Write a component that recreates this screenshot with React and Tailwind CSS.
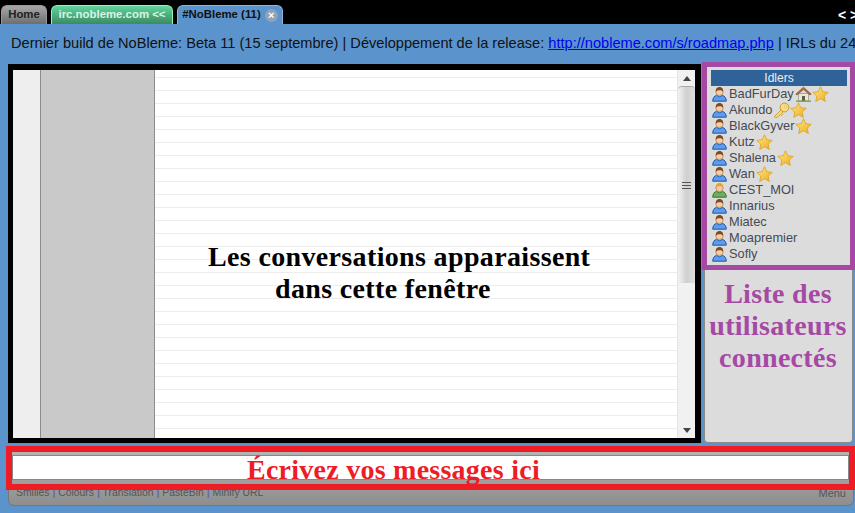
const users = [
  { name: "BadFurDay", badges: ["house", "star"] },
  { name: "Akundo", badges: ["key", "star"] },
  { name: "BlackGyver", badges: ["star"] },
  { name: "Kutz", badges: ["star"] },
  { name: "Shalena", badges: ["star"] },
  { name: "Wan", badges: ["star"] },
  { name: "CEST_MOI", badges: [], me: true },
  { name: "Innarius", badges: [] },
  { name: "Miatec", badges: [] },
  { name: "Moapremier", badges: [] },
  { name: "Sofly", badges: [] },
];

const chatLines = Array.from({ length: 29 });

function UserIcon({ me }) {
  return (
    <svg width="15" height="16" viewBox="0 0 15 16" className="shrink-0">
      <path
        d="M0.7 15.2c0-3.2 1.8-5.4 3.8-5.8l3 1.4 3-1.4c2 .4 3.8 2.6 3.8 5.8z"
        fill={me ? "#6fae5a" : "#5a9cf0"}
        stroke={me ? "#3f7335" : "#2b559f"}
        strokeWidth="1"
      />
      <circle cx="7.5" cy="6" r="3.6" fill="#f3cda6" stroke="#a8744a" strokeWidth="0.7" />
      <path
        d="M3.8 5.8C3.4 2.6 5.4 1 7.5 1s4.1 1.6 3.7 4.8C10.4 4.4 9 4 7.5 4.2 6 4.2 4.6 4.4 3.8 5.8z"
        fill={me ? "#f0a020" : "#7c4a22"}
      />
    </svg>
  );
}

function Star() {
  return (
    <svg width="17" height="16" viewBox="0 0 17 16" className="shrink-0">
      <defs>
        <linearGradient id="starFill" x1="0" y1="0" x2="1" y2="1">
          <stop offset="0" stopColor="#fde88a" />
          <stop offset="1" stopColor="#eeaa1c" />
        </linearGradient>
      </defs>
      <path
        d="M8.5.8l2.3 4.9 5.4.7-4 3.7 1.1 5.3-4.8-2.7-4.8 2.7 1.1-5.3-4-3.7 5.4-.7z"
        fill="url(#starFill)"
        stroke="#d9a21e"
        strokeWidth="0.8"
      />
    </svg>
  );
}

function House() {
  return (
    <svg width="17" height="16" viewBox="0 0 17 16" className="shrink-0">
      <path d="M3.5 7.5h10v7.5h-10z" fill="#efe6d2" stroke="#9a8f78" strokeWidth="0.7" />
      <path d="M7 10h3v5H7z" fill="#5d5a50" />
      <path d="M0.8 8.2L8.5 1.2l7.7 7-1.4.6-6.3-5.4-6.3 5.4z" fill="#b5733a" stroke="#7b4a22" strokeWidth="0.7" />
      <path d="M1 15.2h15" stroke="#6ea84a" strokeWidth="1.4" />
    </svg>
  );
}

function Key() {
  return (
    <svg width="17" height="16" viewBox="0 0 17 16" className="shrink-0">
      <path d="M1.5 14.5L8 8l2 2-1.3 1.3 1 1-1.5 1.2-1-1-3 3-2.7-.4z" fill="#fbdc7a" stroke="#c0922a" strokeWidth="0.8" />
      <circle cx="11.5" cy="5.5" r="4.4" fill="#fbdc7a" stroke="#c0922a" strokeWidth="0.9" />
      <circle cx="12.5" cy="4.5" r="1.2" fill="#fff7d8" stroke="#c0922a" strokeWidth="0.5" />
    </svg>
  );
}

const badgeIcons = { star: Star, house: House, key: Key };

function UserRow({ user }) {
  return (
    <div className="flex h-4 items-center">
      <UserIcon me={user.me} />
      <span className="ml-[2px] mr-px text-[12.8px] text-[#444a55]">{user.name}</span>
      {user.badges.map((badge, index) => {
        const Badge = badgeIcons[badge];
        return <Badge key={index} />;
      })}
    </div>
  );
}

function Scrollbar() {
  return (
    <div className="flex w-[18px] shrink-0 flex-col border-l border-[#e4e4e4] bg-[#f1f1f1]">
      <div className="flex h-[16px] shrink-0 items-center justify-center">
        <div className="h-0 w-0 border-x-[4px] border-b-[5px] border-x-transparent border-b-[#444]" />
      </div>
      <div className="flex h-[197px] shrink-0 flex-col items-center justify-center gap-[2px] rounded-t-sm border-t border-[#aaa] bg-gradient-to-r from-[#f2f2f2] via-[#d0d0d0] to-[#dedede]">
        <div className="h-px w-[9px] bg-[#555]" />
        <div className="h-px w-[9px] bg-[#555]" />
        <div className="h-px w-[9px] bg-[#555]" />
      </div>
      <div className="flex-1" />
      <div className="flex h-[16px] shrink-0 items-center justify-center">
        <div className="h-0 w-0 border-x-[4px] border-t-[5px] border-x-transparent border-t-[#444]" />
      </div>
    </div>
  );
}

export default function App() {
  return (
    <div className="relative h-[513px] w-[855px] overflow-hidden bg-[#5b94cc] font-['Liberation_Sans',sans-serif]">
      <div className="flex h-6 items-end gap-1 bg-black pl-px">
        <div className="flex h-[19px] w-[46px] items-center justify-center rounded-t-md border border-b-0 border-[#999] bg-gradient-to-b from-[#a8a8a8] to-[#6e6e6e] text-[11.4px] font-bold text-[#222]">
          Home
        </div>
        <div className="flex h-[19px] w-[122px] items-center justify-center rounded-t-md border border-b-0 border-[#88ffaa] bg-gradient-to-b from-[#5fd49c] to-[#3d8a62] text-[11.4px] font-bold text-[#d8f5e6]">
          irc.nobleme.com &lt;&lt;
        </div>
        <div className="flex h-[19px] w-[106px] items-center justify-center gap-1 rounded-t-md border border-b-0 border-[#8fb4dc] bg-[#5b94cc] text-[11.4px] font-bold text-[#111]">
          #NoBleme (11)
          <span className="flex h-[13px] w-[13px] items-center justify-center rounded-full bg-[#8fa3b8] text-[11px] leading-none text-white">
            ×
          </span>
        </div>
        <div className="ml-auto mb-[3px] h-3 w-[17px] whitespace-nowrap text-sm leading-3 font-bold text-white">
          &lt; &gt;
        </div>
      </div>

      <div className="flex h-10 items-center whitespace-nowrap pl-[11px] text-[14.6px] text-[#111]">
        Dernier build de NoBleme: Beta 11 (15 septembre) | Développement de la release:&nbsp;
        <span className="text-[#0000ee] underline">http://nobleme.com/s/roadmap.php</span>
        &nbsp;| IRLs du 24
      </div>

      <div className="flex h-[379px] items-stretch pl-2">
        <div className="flex w-[693px] border-y-[5px] border-l-[5px] border-r-[6px] border-t-[6px] border-black">
          <div className="w-[28px] shrink-0 border-r border-[#8c8c8c] bg-[#eeeeee]" />
          <div className="w-[114px] shrink-0 border-r border-[#8c8c8c] bg-[#c9c9c9]" />
          <div className="flex flex-1 flex-col overflow-hidden bg-white">
            <div className="-mt-[5px]">
              {chatLines.map((_, index) => (
                <div key={index} className="h-[13px] border-b border-[#ececec]" />
              ))}
            </div>
          </div>
          <Scrollbar />
        </div>
        <div className="ml-[3px] w-[149px] rounded-b border border-[#8a8a8a] bg-[#dcdcdc] pl-[6px] pr-[5px] pt-[5px]">
          <div className="flex h-4 items-center justify-center bg-[#2f6299] text-xs text-[#e8eef5]">Idlers</div>
          <div className="pl-px">
            {users.map((user) => (
              <UserRow key={user.name} user={user} />
            ))}
          </div>
        </div>
      </div>

      <div className="ml-2 mr-px mt-[3px] h-[60px] rounded-b-md border border-t-0 border-[#777] bg-gradient-to-b from-[#b8b8b8] to-[#8e8e8e] pl-[3px] pr-[4px] pt-[9px]">
        <div className="h-[25px] border border-[#888] bg-white" />
        <div className="mt-[5px] flex items-center justify-between pl-[4px] pr-[3px] text-[10.4px] text-[#555]">
          <div>
            Smilies <b className="text-[#5a6ab0]">|</b> Colours <b className="text-[#5a6ab0]">|</b> Translation{" "}
            <b className="text-[#5a6ab0]">|</b> PasteBin <b className="text-[#5a6ab0]">|</b> Minify URL
          </div>
          <span className="text-[11px]">Menu</span>
        </div>
      </div>

      {/* annotations on top of the screenshot */}
      <div className="absolute left-[702px] top-[62px] h-[208px] w-[153px] border-[5px] border-[#a649a4]" />
      <div className="absolute left-[6px] top-[446px] h-[44px] w-[849px] border-[6px] border-[#ee1c25]" />

      <div className="absolute left-[155px] top-[241px] w-[490px] font-['Liberation_Serif',serif] text-[28px] font-bold leading-[32px] tracking-[0.35px] text-black">
        <div className="pl-[53px]">Les conversations apparaissent</div>
        <div className="pl-[120px]">dans cette fenêtre</div>
      </div>
      <div className="absolute left-[703px] top-[278px] w-[150px] text-center font-['Liberation_Serif',serif] text-[28px] font-bold leading-[32px] tracking-[0.3px] text-[#a649a4]">
        Liste des utilisateurs connectés
      </div>
      <div className="absolute left-[247px] top-[454px] font-['Liberation_Serif',serif] text-[28px] font-bold leading-[32px] tracking-[0.25px] text-[#ee1c25]">
        Écrivez vos messages ici
      </div>
    </div>
  );
}
